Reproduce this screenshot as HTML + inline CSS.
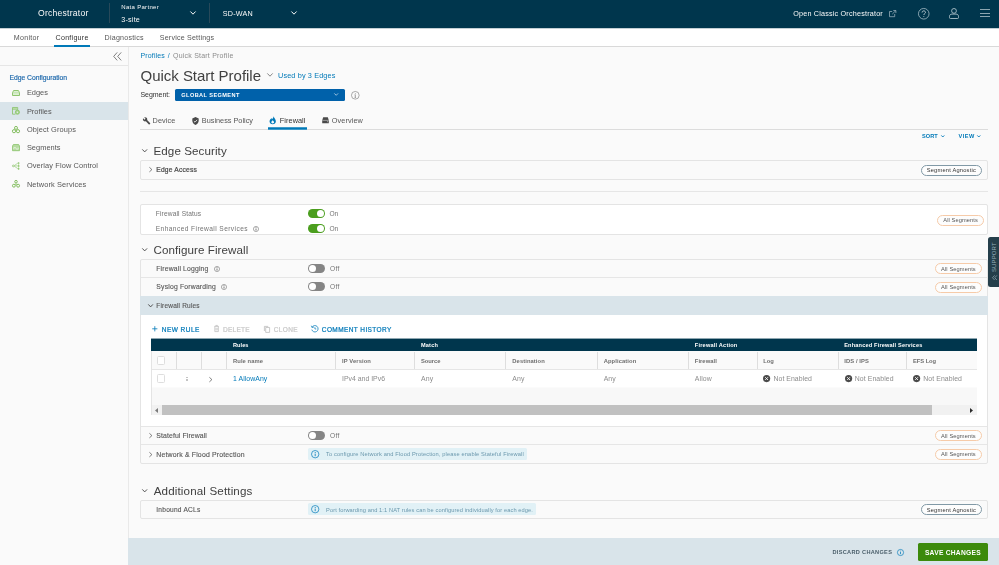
<!DOCTYPE html>
<html><head><meta charset="utf-8"><title>Orchestrator</title>
<style>
*{box-sizing:border-box;margin:0;padding:0}
html,body{width:999px;height:565px;overflow:hidden;background:#fafafa;font-family:"Liberation Sans",sans-serif;color:#565656}
.a{position:absolute;white-space:nowrap;line-height:1}
#tx{position:absolute;left:0;top:0;width:999px;height:565px;will-change:transform}
.b{position:absolute}
svg{position:absolute;overflow:visible}
.card{position:absolute;background:#fafafa;border:1px solid #e4e4e4;border-radius:2px}
.hl{position:absolute;height:1px;background:#e6e6e6}
.vl{position:absolute;width:1px;background:#dedede}
.badge{position:absolute;border:1px solid #8199a6;border-radius:6px;background:#fdfdfd;height:11.1px}
.badge.o{border-color:#f6cba9}
.tog{position:absolute;width:17px;height:9.2px;border-radius:4.6px;background:#4b9e1e}
.tog i{position:absolute;width:7.2px;height:7.2px;border-radius:50%;background:#fff;top:1px;left:8.8px}
.tog.off{background:#858585}
.tog.off i{left:1px}
.cb{position:absolute;width:8.8px;height:8.8px;border:1px solid #dedede;border-radius:1.5px;background:#fff}
.alert{position:absolute;background:#e1f1f6;border-radius:1.5px;height:12px}
</style></head><body>
<!-- header -->
<div class="b" style="left:0;top:0;width:999px;height:28.4px;background:#00364d"></div>
<div class="b" style="left:109px;top:3px;width:1px;height:20px;background:#27495a"></div>
<div class="b" style="left:209px;top:3px;width:1px;height:20px;background:#27495a"></div>
<svg style="left:190px;top:11.4px" width="6" height="4" viewBox="0 0 6 4"><path d="M.4.5 3 3.2 5.6.5" fill="none" stroke="#fafafa" stroke-width="1"/></svg>
<svg style="left:291.4px;top:11.4px" width="6" height="4" viewBox="0 0 6 4"><path d="M.4.5 3 3.2 5.6.5" fill="none" stroke="#fafafa" stroke-width="1"/></svg>
<!-- ext link -->
<svg style="left:888.7px;top:9.6px" width="7.4" height="7.2" viewBox="0 0 7.4 7.2"><path d="M3.2 1.500H.5V6.700H5.700V4" fill="none" stroke="#9db3be" stroke-width=".75"/><path d="M4.300.5H6.900V3.100M6.800.6 3.300 4.100" fill="none" stroke="#9db3be" stroke-width=".75"/></svg>
<!-- help -->
<svg style="left:918.2px;top:7.5px" width="11.5" height="11.5" viewBox="0 0 11.5 11.5"><circle cx="5.750" cy="5.750" r="5.300" fill="none" stroke="#a5bbc5" stroke-width=".8"/><path d="M4.100 4.500C4.100 3.400 4.900 2.900 5.800 2.900S7.500 3.500 7.500 4.400C7.500 5.600 5.800 5.700 5.800 7" fill="none" stroke="#b5c7cf" stroke-width="1"/><circle cx="5.800" cy="8.500" r=".55" fill="#a5bbc5"/></svg>
<!-- user -->
<svg style="left:949.4px;top:8px" width="10" height="11" viewBox="0 0 10 11"><circle cx="5" cy="2.900" r="2.400" fill="none" stroke="#b5c7cf" stroke-width=".85"/><path d="M.5 9.600V8.300C.5 6.900 1.600 6.100 3 6.100H7C8.400 6.100 9.500 6.900 9.500 8.300V9.600C9.500 10.200 9.100 10.500 8.600 10.500H1.400C.9 10.500.5 10.200.5 9.600Z" fill="none" stroke="#b5c7cf" stroke-width=".85"/></svg>
<!-- hamburger -->
<div class="b" style="left:979.9px;top:9.300px;width:10.200px;height:1.2px;background:#8ba5b0"></div>
<div class="b" style="left:979.9px;top:12.700px;width:10.200px;height:1.2px;background:#8ba5b0"></div>
<div class="b" style="left:979.9px;top:16.100px;width:10.200px;height:1.2px;background:#8ba5b0"></div>

<!-- nav -->
<div class="b" style="left:0;top:28.4px;width:999px;height:18px;background:#fff"></div>
<div class="b" style="left:0;top:28px;width:999px;height:1px;background:#c3d0d5"></div>
<div class="b" style="left:0;top:46px;width:999px;height:1px;background:#d9d9d9"></div>
<div class="b" style="left:54.2px;top:45px;width:35.800px;height:2px;background:#0079b8"></div>

<!-- sidebar -->
<div class="b" style="left:0;top:47px;width:128px;height:518px;background:#fafafa"></div>
<div class="b" style="left:127.5px;top:47px;width:1px;height:518px;background:#e9e9e9"></div>
<div class="b" style="left:0;top:64.800px;width:128px;height:1px;background:#e6e6e6"></div>
<svg style="left:112.800px;top:51.600px" width="9" height="9" viewBox="0 0 9 9"><path d="M4.200.4.700 4.400 4.200 8.400M8.200.4 4.700 4.400 8.200 8.400" fill="none" stroke="#565656" stroke-width=".75"/></svg>
<div class="b" style="left:0;top:102px;width:127.500px;height:18.200px;background:#d9e4ea"></div>
<!--SISTART-->
<!-- side icons -->
<svg style="left:12px;top:89.800px" width="8" height="6" viewBox="0 0 8 6"><path d="M1.600.5H6.400L7.500 2.700V5.500H.5V2.700Z" fill="#dcefd2" stroke="#84c061" stroke-width=".9"/><path d="M.6 2.800H7.400" stroke="#a9d590" stroke-width=".6"/></svg>
<svg style="left:12px;top:106.800px" width="8" height="7.800" viewBox="0 0 8 7.800"><path d="M.5.500H5.700V2.800M3.400 7.200H.5V.5M.5 2.200H5.700" fill="none" stroke="#86c064" stroke-width=".8"/><path d="M1 1H5.200V2.200H1Z" fill="#b5dba0"/><circle cx="5.400" cy="5.200" r="2.100" fill="#a5d48a" stroke="#86c064" stroke-width=".7"/><circle cx="5.400" cy="5.200" r=".7" fill="#e4edf0"/></svg>
<svg style="left:12px;top:125.600px" width="8" height="7.200" viewBox="0 0 8 7.200"><circle cx="4" cy="1.900" r="1.500" fill="none" stroke="#7dba58" stroke-width=".95"/><circle cx="2" cy="5.200" r="1.600" fill="none" stroke="#7dba58" stroke-width=".95"/><circle cx="6" cy="5.200" r="1.600" fill="none" stroke="#7dba58" stroke-width=".95"/></svg>
<svg style="left:12px;top:143.800px" width="8" height="7.200" viewBox="0 0 8 7.200"><path d="M1.400.5H6.600L7.500 2V6.700H.5V2Z" fill="#b5dba0" stroke="#86c064" stroke-width=".75"/><path d="M1.800 5.200V3.600H3.600L4.400 5.200H6.200V3.600" fill="none" stroke="#f1f8ec" stroke-width=".7"/></svg>
<svg style="left:12px;top:161.800px" width="8" height="7.800" viewBox="0 0 8 7.800"><circle cx="1.300" cy="3.900" r=".9" fill="none" stroke="#7fbb5b" stroke-width=".6"/><path d="M2.200 3.900H5.800M2.200 3.600 5.800 1.200M2.200 4.200 5.800 6.600" stroke="#8fc86e" stroke-width=".6"/><circle cx="6.600" cy="1" r=".85" fill="#86c064"/><circle cx="6.600" cy="3.900" r=".85" fill="#86c064"/><circle cx="6.600" cy="6.800" r=".85" fill="#86c064"/><path d="M6.600 1V6.800" stroke="#9fd082" stroke-width=".6"/></svg>
<svg style="left:12px;top:180px" width="8" height="7.600" viewBox="0 0 8 7.600"><circle cx="4" cy="1.700" r="1.300" fill="none" stroke="#7dba58" stroke-width=".95"/><circle cx="1.900" cy="5.700" r="1.450" fill="none" stroke="#7dba58" stroke-width=".95"/><circle cx="6.100" cy="5.700" r="1.450" fill="none" stroke="#7dba58" stroke-width=".95"/><path d="M4 3V4.400L2.800 4.900M4 4.400 5.200 4.900" fill="none" stroke="#8fc86e" stroke-width=".65"/></svg>
<!--SIEND-->

<!-- main -->
<!--MAINSTART-->
<!-- title chevron -->
<svg style="left:266.600px;top:73.400px" width="6" height="4" viewBox="0 0 6 4"><path d="M.3.4 3 3.200 5.700.4" fill="none" stroke="#565656" stroke-width=".7"/></svg>
<!-- segment select -->
<div class="b" style="left:174.800px;top:88.500px;width:170.400px;height:12px;background:#0061aa;border-radius:1.500px"></div>
<svg style="left:334.400px;top:93.300px" width="4.400" height="3" viewBox="0 0 4.400 3"><path d="M.3.4 2.200 2.300 4.100.4" fill="none" stroke="#dbe9f4" stroke-width=".7"/></svg>
<svg style="left:351.200px;top:90.800px" width="8.600" height="8.600" viewBox="0 0 8.600 8.600"><circle cx="4.300" cy="4.300" r="3.850" fill="none" stroke="#737373" stroke-width=".6"/><path d="M4.300 3.700V6.300M3.600 6.400H5M3.700 3.700H4.300" fill="none" stroke="#737373" stroke-width=".65"/><circle cx="4.300" cy="2.400" r=".45" fill="#737373"/></svg>
<!-- tabs -->
<div class="hl" style="left:140px;top:129.300px;width:847.700px;background:#dcdcdc"></div>
<div class="b" style="left:268px;top:127px;width:38.800px;height:3px;background:#3e99c8"></div>
<div class="b" style="left:268px;top:128px;width:38.800px;height:1px;background:#0079b8"></div>
<!-- tab icons -->
<svg style="left:142.500px;top:116.700px" width="7.600" height="7.600" viewBox="0 0 16 16"><path d="M15.200 13 8.700 6.500C9.300 4.800 8.900 2.900 7.600 1.600 6.200.2 4.100-.1 2.400.7L5.400 3.700 3.300 5.800.2 2.800C-.6 4.500-.3 6.600 1.100 8 2.400 9.300 4.300 9.700 6 9.100L12.500 15.600C12.800 15.900 13.200 15.900 13.500 15.600L15.100 14C15.500 13.700 15.500 13.200 15.200 13Z" fill="#4a4a4a"/></svg>
<svg style="left:192px;top:116.500px" width="7" height="8.200" viewBox="0 0 14 16.400"><path d="M7 .2.600 3V7.200C.6 11.100 3.300 14.800 7 16 10.700 14.800 13.400 11.100 13.400 7.200V3Z" fill="#4a4a4a"/><path d="M3.800 8.200 6 10.400 10.200 5.700" fill="none" stroke="#fafafa" stroke-width="1.600"/></svg>
<svg style="left:269.400px;top:116.300px" width="7.400" height="8.600" viewBox="0 0 15 17.400"><path d="M8.800.6C9.600 3.600 7.200 4.800 5.900 6.900 5.400 5.900 5.500 5 5.700 4.200 3 5.900 1.100 8.500 1.100 11.200 1.100 14.400 3.800 16.800 7.500 16.800S13.900 14.400 13.900 11.200C13.900 6.800 10.700 4.700 8.800.6Z" fill="#0079b8"/><path d="M7.500 15C5.800 15 4.700 13.900 4.700 12.600 4.700 11 6.300 10 7.300 8.400 8.800 10 10.300 11 10.300 12.600 10.300 13.900 9.200 15 7.500 15Z" fill="#fafafa"/></svg>
<svg style="left:321.800px;top:117.300px" width="7" height="6.400" viewBox="0 0 14 12.800"><path d="M2.400.4H11.600L13.600 6.600V12.400H.4V6.600Z" fill="#4a4a4a"/><path d="M.4 6.800H13.600" stroke="#fafafa" stroke-width=".9"/><circle cx="11" cy="9.600" r=".9" fill="#fafafa"/></svg>
<!-- sort/view chevrons -->
<svg style="left:940.700px;top:134.800px" width="3.600" height="2.600" viewBox="0 0 3.600 2.600"><path d="M.3.4 1.800 2 3.300.4" fill="none" stroke="#0079b8" stroke-width=".9"/></svg>
<svg style="left:977.200px;top:134.800px" width="3.600" height="2.600" viewBox="0 0 3.600 2.600"><path d="M.3.4 1.800 2 3.300.4" fill="none" stroke="#0079b8" stroke-width=".9"/></svg>
<!-- section chevrons -->
<svg style="left:142.200px;top:149.100px" width="5.400" height="3.600" viewBox="0 0 5.400 3.600"><path d="M.3.400 2.700 2.900 5.100.4" fill="none" stroke="#4a4a4a" stroke-width=".95"/></svg>
<svg style="left:142.200px;top:248.100px" width="5.400" height="3.600" viewBox="0 0 5.400 3.600"><path d="M.3.400 2.700 2.900 5.100.4" fill="none" stroke="#4a4a4a" stroke-width=".95"/></svg>
<svg style="left:142.200px;top:489.100px" width="5.400" height="3.600" viewBox="0 0 5.400 3.600"><path d="M.3.400 2.700 2.900 5.100.4" fill="none" stroke="#4a4a4a" stroke-width=".95"/></svg>
<!-- edge access card -->
<div class="card" style="left:140px;top:160px;width:847.700px;height:20px"></div>
<svg style="left:148.700px;top:167.400px" width="3.400" height="5.200" viewBox="0 0 3.400 5.200"><path d="M.4.300 2.900 2.600.4 4.900" fill="none" stroke="#565656" stroke-width=".75"/></svg>
<div class="badge" style="left:920.700px;top:164.800px;width:61.200px"></div>
<div class="hl" style="left:140px;top:191px;width:847.700px"></div>
<!-- firewall status card -->
<div class="card" style="left:140px;top:204px;width:847.700px;height:31px;background:#fff"></div>
<div class="tog" style="left:307.800px;top:208.900px"><i></i></div>
<div class="tog" style="left:307.800px;top:224.100px"><i></i></div>
<svg style="left:253px;top:225.800px" width="6" height="6" viewBox="0 0 8.600 8.600"><circle cx="4.300" cy="4.300" r="3.700" fill="none" stroke="#6a6a6a" stroke-width=".8"/><path d="M4.300 3.600V6.500" stroke="#565656" stroke-width="1.100"/><circle cx="4.300" cy="2.300" r=".7" fill="#565656"/></svg>
<div class="badge o" style="left:937.300px;top:214.600px;width:46.500px"></div>
<!-- configure card -->
<div class="card" style="left:140px;top:259px;width:847.700px;height:205px"></div>
<div class="hl" style="left:141px;top:277.400px;width:845.700px"></div>
<div class="tog off" style="left:308px;top:264.100px"><i></i></div>
<div class="tog off" style="left:308px;top:282.300px"><i></i></div>
<svg style="left:214px;top:265.900px" width="6" height="6" viewBox="0 0 8.600 8.600"><circle cx="4.300" cy="4.300" r="3.700" fill="none" stroke="#6a6a6a" stroke-width=".8"/><path d="M4.300 3.600V6.500" stroke="#565656" stroke-width="1.100"/><circle cx="4.300" cy="2.300" r=".7" fill="#565656"/></svg>
<svg style="left:221.300px;top:284.200px" width="6" height="6" viewBox="0 0 8.600 8.600"><circle cx="4.300" cy="4.300" r="3.700" fill="none" stroke="#6a6a6a" stroke-width=".8"/><path d="M4.300 3.600V6.500" stroke="#565656" stroke-width="1.100"/><circle cx="4.300" cy="2.300" r=".7" fill="#565656"/></svg>
<div class="badge o" style="left:935.100px;top:263.300px;width:46.800px"></div>
<div class="badge o" style="left:935.100px;top:282px;width:46.800px"></div>
<!-- firewall rules band -->
<div class="b" style="left:140px;top:296.400px;width:847.700px;height:18.400px;background:#d9e4ea"></div>
<svg style="left:147.900px;top:304.200px" width="5.200" height="3.400" viewBox="0 0 5.200 3.400"><path d="M.3.400 2.600 2.900 4.900.4" fill="none" stroke="#4a4a4a" stroke-width=".95"/></svg>
<div class="b" style="left:141px;top:314.800px;width:845.700px;height:111.600px;background:#fff"></div>
<!-- toolbar icons -->
<svg style="left:152.200px;top:326.300px" width="5.600" height="5.600" viewBox="0 0 5.600 5.600"><path d="M2.800.2V5.400M.2 2.800H5.400" stroke="#0079b8" stroke-width=".8"/></svg>
<svg style="left:213.500px;top:325.400px" width="5.200" height="7" viewBox="0 0 5.200 7"><path d="M.3 1.400H4.900M1.800 1.400V.4H3.400V1.400M.8 1.600V6.600H4.400V1.600M2 2.800V5.400M3.200 2.800V5.400" fill="none" stroke="#bdbdbd" stroke-width=".75"/></svg>
<svg style="left:264.400px;top:325.600px" width="6" height="6.800" viewBox="0 0 6 6.800"><path d="M1.700 1.500H5.600V6.400H1.700Z" fill="none" stroke="#bdbdbd" stroke-width=".8"/><path d="M.4 5V.4H4.200" fill="none" stroke="#bdbdbd" stroke-width=".8"/></svg>
<svg style="left:311.300px;top:325.200px" width="7.400" height="7.400" viewBox="0 0 7.400 7.400"><path d="M1.100 2.200A3.200 3.200 0 1 1 .8 4.600" fill="none" stroke="#0079b8" stroke-width=".75"/><path d="M.3.700 1 2.500 2.800 2.200" fill="none" stroke="#0079b8" stroke-width=".7"/><path d="M3.900 2.200V4H5.300" fill="none" stroke="#0079b8" stroke-width=".7"/></svg>
<!-- table -->
<div class="b" style="left:151px;top:338px;width:826.300px;height:1px;background:#8fa7b1"></div>
<div class="b" style="left:151px;top:339px;width:826.300px;height:12px;background:#00364d"></div>
<div class="b" style="left:151px;top:351px;width:826.300px;height:18px;background:#fafafa"></div>
<div class="hl" style="left:151px;top:368.700px;width:826.300px;background:#e6e6e6"></div>
<div class="b" style="left:151px;top:387px;width:826.300px;height:1px;background:#fbfbfb"></div>
<div class="b" style="left:151px;top:388px;width:826.300px;height:17px;background:#f8f8f8"></div>
<div class="b" style="left:151px;top:405px;width:826.300px;height:10.400px;background:#f1f1f1"></div>
<div class="b" style="left:162.200px;top:405px;width:769.800px;height:10.400px;background:#c1c1c1"></div>
<svg style="left:155px;top:407.800px" width="3" height="5" viewBox="0 0 3 5"><path d="M3 0V5L0 2.500Z" fill="#7a7a7a"/></svg>
<svg style="left:970.300px;top:407.800px" width="3" height="5" viewBox="0 0 3 5"><path d="M0 0V5L3 2.500Z" fill="#2b2b2b"/></svg>
<div class="vl" style="left:150.500px;top:351px;height:64.400px;background:#e4e4e4"></div>
<div class="vl" style="left:175.800px;top:352px;height:16.700px"></div>
<div class="vl" style="left:200.800px;top:352px;height:16.700px"></div>
<div class="vl" style="left:225.800px;top:352px;height:16.700px"></div>
<div class="vl" style="left:335px;top:352px;height:16.700px"></div>
<div class="vl" style="left:414.200px;top:352px;height:16.700px"></div>
<div class="vl" style="left:505.400px;top:352px;height:16.700px"></div>
<div class="vl" style="left:596.800px;top:352px;height:16.700px"></div>
<div class="vl" style="left:687.900px;top:352px;height:16.700px"></div>
<div class="vl" style="left:756.600px;top:352px;height:16.700px"></div>
<div class="vl" style="left:837.900px;top:352px;height:16.700px"></div>
<div class="vl" style="left:906.200px;top:352px;height:16.700px"></div>
<div class="cb" style="left:156.700px;top:356.100px"></div>
<div class="cb" style="left:156.700px;top:374.300px"></div>
<!-- drag handle -->
<div class="b" style="left:186.200px;top:377.200px;width:1.600px;height:.8px;background:#c4c4c4"></div>
<div class="b" style="left:186.200px;top:378.700px;width:1.600px;height:.8px;background:#c4c4c4"></div>
<div class="b" style="left:186.200px;top:380.200px;width:1.600px;height:.8px;background:#c4c4c4"></div>
<svg style="left:209.200px;top:376.900px" width="3.400" height="5.200" viewBox="0 0 3.400 5.200"><path d="M.4.300 2.900 2.600.4 4.900" fill="none" stroke="#565656" stroke-width=".75"/></svg>
<!-- x icons -->
<svg style="left:763.4px;top:375.400px" width="7.200" height="7.200" viewBox="0 0 6.600 6.600"><circle cx="3.300" cy="3.300" r="3.300" fill="#4a4a4a"/><path d="M2 2 4.600 4.600M4.600 2 2 4.600" stroke="#fff" stroke-width=".8"/></svg>
<svg style="left:844.5px;top:375.400px" width="7.200" height="7.200" viewBox="0 0 6.600 6.600"><circle cx="3.300" cy="3.300" r="3.300" fill="#4a4a4a"/><path d="M2 2 4.600 4.600M4.600 2 2 4.600" stroke="#fff" stroke-width=".8"/></svg>
<svg style="left:913.0px;top:375.400px" width="7.200" height="7.200" viewBox="0 0 6.600 6.600"><circle cx="3.300" cy="3.300" r="3.300" fill="#4a4a4a"/><path d="M2 2 4.600 4.600M4.600 2 2 4.600" stroke="#fff" stroke-width=".8"/></svg>
<!-- stateful / network rows -->
<div class="hl" style="left:141px;top:426.300px;width:845.700px"></div>
<div class="hl" style="left:141px;top:444.400px;width:845.700px"></div>
<svg style="left:148.700px;top:433px" width="3.400" height="5.200" viewBox="0 0 3.400 5.200"><path d="M.4.300 2.900 2.600.4 4.900" fill="none" stroke="#565656" stroke-width=".75"/></svg>
<svg style="left:148.700px;top:451.500px" width="3.400" height="5.200" viewBox="0 0 3.400 5.200"><path d="M.4.300 2.900 2.600.4 4.900" fill="none" stroke="#565656" stroke-width=".75"/></svg>
<div class="tog off" style="left:308px;top:431.100px"><i></i></div>
<div class="badge o" style="left:935.100px;top:430.100px;width:46.800px"></div>
<div class="badge o" style="left:935.100px;top:448.600px;width:46.800px"></div>
<div class="alert" style="left:308.200px;top:448px;width:218.600px"></div>
<svg style="left:311.200px;top:449.900px" width="8.400" height="8.400" viewBox="0 0 8.400 8.400"><circle cx="4.200" cy="4.200" r="3.700" fill="none" stroke="#0079b8" stroke-width=".7"/><path d="M4.200 3.600V6.200" stroke="#0079b8" stroke-width=".8"/><circle cx="4.200" cy="2.400" r=".5" fill="#0079b8"/></svg>
<!-- inbound card -->
<div class="card" style="left:140px;top:500px;width:847.700px;height:19px"></div>
<div class="alert" style="left:308.200px;top:503.400px;width:227.600px"></div>
<svg style="left:311.200px;top:505.300px" width="8.400" height="8.400" viewBox="0 0 8.400 8.400"><circle cx="4.200" cy="4.200" r="3.700" fill="none" stroke="#0079b8" stroke-width=".7"/><path d="M4.200 3.600V6.200" stroke="#0079b8" stroke-width=".8"/><circle cx="4.200" cy="2.400" r=".5" fill="#0079b8"/></svg>
<div class="badge" style="left:920.700px;top:504.300px;width:61.200px"></div>
<!-- footer -->
<div class="b" style="left:128px;top:538.200px;width:871px;height:27px;background:#d9e4ea"></div>
<div class="b" style="left:918.300px;top:543.300px;width:69.500px;height:18px;background:#3c8a0b;border-radius:1.500px"></div>
<svg style="left:897px;top:549px" width="7" height="7" viewBox="0 0 8.400 8.400"><circle cx="4.200" cy="4.200" r="3.700" fill="none" stroke="#0079b8" stroke-width=".8"/><path d="M4.200 3.600V6.200" stroke="#0079b8" stroke-width=".9"/><circle cx="4.200" cy="2.400" r=".55" fill="#0079b8"/></svg>
<!-- support tab -->
<div class="b" style="left:987.700px;top:237.400px;width:12px;height:49.200px;background:#253f4b;border-radius:2.500px 0 0 2.500px"></div>
<span class="a" style="left:991px;top:272.400px;font-size:6px;color:#97afbb;transform-origin:0 0;transform:rotate(-90deg);letter-spacing:.12px">SUPPORT</span>
<svg style="left:991.700px;top:274.600px" width="5.400" height="5.400" viewBox="0 0 5.400 5.400"><path d="M2.600.4.500 2.700 2.600 5M4.900.4 2.800 2.700 4.900 5" fill="none" stroke="#a9bfca" stroke-width=".6"/></svg>
<!--MAINEND-->
<div id="tx">
<span class="a" style="left:38.10px;top:9.00px;font-size:8.6px;letter-spacing:0.220px;color:#fafafa;">Orchestrator</span>
<span class="a" style="left:121.30px;top:4.00px;font-size:6.0px;letter-spacing:0.306px;color:#fafafa;">Nata Partner</span>
<span class="a" style="left:121.30px;top:16.00px;font-size:7.2px;letter-spacing:0.187px;color:#fafafa;">3-site</span>
<span class="a" style="left:222.80px;top:10.00px;font-size:7.2px;letter-spacing:0.218px;color:#fafafa;">SD-WAN</span>
<span class="a" style="left:793.20px;top:10.00px;font-size:7.2px;letter-spacing:0.204px;color:#fafafa;">Open Classic Orchestrator</span>
<span class="a" style="left:13.80px;top:35.00px;font-size:7.1px;letter-spacing:0.263px;color:#565656;">Monitor</span>
<span class="a" style="left:55.60px;top:35.00px;font-size:7.1px;letter-spacing:0.248px;color:#313131;">Configure</span>
<span class="a" style="left:104.60px;top:35.00px;font-size:7.1px;letter-spacing:0.221px;color:#565656;">Diagnostics</span>
<span class="a" style="left:159.80px;top:35.00px;font-size:7.1px;letter-spacing:0.196px;color:#565656;">Service Settings</span>
<span class="a" style="left:9.60px;top:75.00px;font-size:6.8px;letter-spacing:-0.050px;color:#1a66aa;-webkit-text-stroke:.15px">Edge Configuration</span>
<span class="a" style="left:26.90px;top:89.00px;font-size:7.4px;letter-spacing:0.006px;color:#565656;">Edges</span>
<span class="a" style="left:26.90px;top:108.00px;font-size:7.4px;letter-spacing:0.018px;color:#565656;">Profiles</span>
<span class="a" style="left:26.90px;top:126.00px;font-size:7.4px;letter-spacing:0.111px;color:#565656;">Object Groups</span>
<span class="a" style="left:26.90px;top:144.00px;font-size:7.4px;letter-spacing:0.052px;color:#565656;">Segments</span>
<span class="a" style="left:26.90px;top:162.00px;font-size:7.4px;letter-spacing:0.110px;color:#565656;">Overlay Flow Control</span>
<span class="a" style="left:26.90px;top:181.00px;font-size:7.4px;letter-spacing:0.125px;color:#565656;">Network Services</span>
<span class="a" style="left:140.50px;top:52.00px;font-size:7.0px;letter-spacing:0.145px;color:#0079b8;">Profiles</span>
<span class="a" style="left:167.80px;top:52.00px;font-size:7.0px;letter-spacing:0.647px;color:#0079b8;">/</span>
<span class="a" style="left:173.00px;top:52.00px;font-size:7.0px;letter-spacing:0.215px;color:#8c8c8c;">Quick Start Profile</span>
<span class="a" style="left:140.50px;top:68.00px;font-size:15px;letter-spacing:-0.020px;color:#404040;">Quick Start Profile</span>
<span class="a" style="left:278.00px;top:72.00px;font-size:7.3px;letter-spacing:0.128px;color:#0079b8;">Used by 3 Edges</span>
<span class="a" style="left:140.50px;top:91.00px;font-size:7.0px;letter-spacing:-0.059px;color:#313131;">Segment:</span>
<span class="a" style="left:181.30px;top:93.00px;font-size:5.6px;letter-spacing:0.412px;color:#ffffff;font-weight:700;">GLOBAL SEGMENT</span>
<span class="a" style="left:152.50px;top:117.00px;font-size:7.3px;letter-spacing:0.115px;color:#565656;">Device</span>
<span class="a" style="left:201.80px;top:117.00px;font-size:7.3px;letter-spacing:0.006px;color:#565656;">Business Policy</span>
<span class="a" style="left:279.80px;top:117.00px;font-size:7.3px;letter-spacing:0.070px;color:#313131;">Firewall</span>
<span class="a" style="left:331.80px;top:117.00px;font-size:7.3px;letter-spacing:0.097px;color:#565656;">Overview</span>
<span class="a" style="left:921.90px;top:134.00px;font-size:5.6px;letter-spacing:0.088px;color:#0079b8;font-weight:700;">SORT</span>
<span class="a" style="left:958.50px;top:134.00px;font-size:5.6px;letter-spacing:0.476px;color:#0079b8;font-weight:700;">VIEW</span>
<span class="a" style="left:153.50px;top:145.00px;font-size:11.6px;letter-spacing:0.086px;color:#404040;">Edge Security</span>
<span class="a" style="left:153.50px;top:244.00px;font-size:11.6px;letter-spacing:0.076px;color:#404040;">Configure Firewall</span>
<span class="a" style="left:153.70px;top:485.00px;font-size:11.6px;letter-spacing:0.145px;color:#404040;">Additional Settings</span>
<span class="a" style="left:156.30px;top:167.00px;font-size:6.7px;letter-spacing:0.184px;color:#4a4a4a;-webkit-text-stroke:.22px">Edge Access</span>
<span class="a" style="left:155.80px;top:211.00px;font-size:6.6px;letter-spacing:0.150px;color:#737373;">Firewall Status</span>
<span class="a" style="left:155.80px;top:226.00px;font-size:6.6px;letter-spacing:0.416px;color:#737373;">Enhanced Firewall Services</span>
<span class="a" style="left:329.50px;top:211.00px;font-size:6.6px;letter-spacing:-0.148px;color:#737373;">On</span>
<span class="a" style="left:329.50px;top:226.00px;font-size:6.6px;letter-spacing:-0.148px;color:#737373;">On</span>
<span class="a" style="left:156.30px;top:266.00px;font-size:6.8px;letter-spacing:0.169px;color:#565656;-webkit-text-stroke:.12px">Firewall Logging</span>
<span class="a" style="left:156.30px;top:284.00px;font-size:6.8px;letter-spacing:0.200px;color:#565656;-webkit-text-stroke:.12px">Syslog Forwarding</span>
<span class="a" style="left:330.00px;top:266.00px;font-size:6.6px;letter-spacing:0.271px;color:#737373;">Off</span>
<span class="a" style="left:330.00px;top:284.00px;font-size:6.6px;letter-spacing:0.271px;color:#737373;">Off</span>
<span class="a" style="left:156.30px;top:303.00px;font-size:6.5px;letter-spacing:0.191px;color:#565656;-webkit-text-stroke:.12px">Firewall Rules</span>
<span class="a" style="left:156.30px;top:433.00px;font-size:6.9px;letter-spacing:0.098px;color:#565656;-webkit-text-stroke:.12px">Stateful Firewall</span>
<span class="a" style="left:330.00px;top:433.00px;font-size:6.6px;letter-spacing:0.271px;color:#737373;">Off</span>
<span class="a" style="left:156.30px;top:452.00px;font-size:6.9px;letter-spacing:0.178px;color:#565656;-webkit-text-stroke:.12px">Network &amp; Flood Protection</span>
<span class="a" style="left:156.30px;top:507.00px;font-size:6.6px;letter-spacing:0.230px;color:#565656;-webkit-text-stroke:.12px">Inbound ACLs</span>
<span class="a" style="left:161.80px;top:327.00px;font-size:6.5px;letter-spacing:0.461px;color:#0079b8;-webkit-text-stroke:.22px">NEW RULE</span>
<span class="a" style="left:223.00px;top:327.00px;font-size:6.5px;letter-spacing:0.284px;color:#c8c8c8;-webkit-text-stroke:.22px">DELETE</span>
<span class="a" style="left:273.80px;top:327.00px;font-size:6.5px;letter-spacing:0.359px;color:#c8c8c8;-webkit-text-stroke:.22px">CLONE</span>
<span class="a" style="left:321.80px;top:327.00px;font-size:6.5px;letter-spacing:0.404px;color:#0079b8;-webkit-text-stroke:.22px">COMMENT HISTORY</span>
<span class="a" style="left:233.00px;top:343.00px;font-size:5.6px;letter-spacing:0.053px;color:#ffffff;font-weight:700;">Rules</span>
<span class="a" style="left:421.00px;top:343.00px;font-size:5.6px;letter-spacing:0.166px;color:#ffffff;font-weight:700;">Match</span>
<span class="a" style="left:694.80px;top:343.00px;font-size:5.6px;letter-spacing:0.208px;color:#ffffff;font-weight:700;">Firewall Action</span>
<span class="a" style="left:844.20px;top:343.00px;font-size:5.6px;letter-spacing:0.177px;color:#ffffff;font-weight:700;">Enhanced Firewall Services</span>
<span class="a" style="left:233.00px;top:359.00px;font-size:5.8px;letter-spacing:0.075px;color:#6e6e6e;font-weight:700;">Rule name</span>
<span class="a" style="left:342.00px;top:359.00px;font-size:5.8px;letter-spacing:0.106px;color:#6e6e6e;font-weight:700;">IP Version</span>
<span class="a" style="left:421.00px;top:359.00px;font-size:5.8px;letter-spacing:-0.026px;color:#6e6e6e;font-weight:700;">Source</span>
<span class="a" style="left:512.30px;top:359.00px;font-size:5.8px;letter-spacing:0.084px;color:#6e6e6e;font-weight:700;">Destination</span>
<span class="a" style="left:603.70px;top:359.00px;font-size:5.8px;letter-spacing:0.094px;color:#6e6e6e;font-weight:700;">Application</span>
<span class="a" style="left:694.80px;top:359.00px;font-size:5.8px;letter-spacing:0.051px;color:#6e6e6e;font-weight:700;">Firewall</span>
<span class="a" style="left:763.30px;top:359.00px;font-size:5.8px;letter-spacing:-0.042px;color:#6e6e6e;font-weight:700;">Log</span>
<span class="a" style="left:844.20px;top:359.00px;font-size:5.8px;letter-spacing:0.106px;color:#6e6e6e;font-weight:700;">IDS / IPS</span>
<span class="a" style="left:913.10px;top:359.00px;font-size:5.8px;letter-spacing:-0.088px;color:#6e6e6e;font-weight:700;">EFS Log</span>
<span class="a" style="left:233.00px;top:376.00px;font-size:6.9px;letter-spacing:0.058px;color:#0079b8;">1 AllowAny</span>
<span class="a" style="left:342.00px;top:376.00px;font-size:6.9px;letter-spacing:0.007px;color:#8c8c8c;">IPv4 and IPv6</span>
<span class="a" style="left:421.00px;top:376.00px;font-size:6.9px;letter-spacing:0.208px;color:#8c8c8c;">Any</span>
<span class="a" style="left:512.30px;top:376.00px;font-size:6.9px;letter-spacing:0.142px;color:#8c8c8c;">Any</span>
<span class="a" style="left:603.70px;top:376.00px;font-size:6.9px;letter-spacing:0.042px;color:#8c8c8c;">Any</span>
<span class="a" style="left:694.80px;top:376.00px;font-size:6.9px;letter-spacing:0.106px;color:#8c8c8c;">Allow</span>
<span class="a" style="left:773.50px;top:376.00px;font-size:6.9px;letter-spacing:0.051px;color:#8c8c8c;">Not Enabled</span>
<span class="a" style="left:854.80px;top:376.00px;font-size:6.9px;letter-spacing:0.078px;color:#8c8c8c;">Not Enabled</span>
<span class="a" style="left:923.30px;top:376.00px;font-size:6.9px;letter-spacing:0.069px;color:#8c8c8c;">Not Enabled</span>
<span class="a" style="left:326.00px;top:452.00px;font-size:5.7px;letter-spacing:0.131px;color:#6b98ad;">To configure Network and Flood Protection, please enable Stateful Firewall</span>
<span class="a" style="left:326.00px;top:508.00px;font-size:5.7px;letter-spacing:0.094px;color:#6b98ad;">Port forwarding and 1:1 NAT rules can be configured individually for each edge.</span>
<span class="a" style="left:926.70px;top:168.00px;font-size:5.7px;letter-spacing:0.216px;color:#313131;">Segment Agnostic</span>
<span class="a" style="left:943.30px;top:218.00px;font-size:5.7px;letter-spacing:0.099px;color:#565656;">All Segments</span>
<span class="a" style="left:941.10px;top:267.00px;font-size:5.7px;letter-spacing:0.099px;color:#565656;">All Segments</span>
<span class="a" style="left:941.10px;top:285.00px;font-size:5.7px;letter-spacing:0.099px;color:#565656;">All Segments</span>
<span class="a" style="left:941.10px;top:434.00px;font-size:5.7px;letter-spacing:0.099px;color:#565656;">All Segments</span>
<span class="a" style="left:941.10px;top:452.00px;font-size:5.7px;letter-spacing:0.099px;color:#565656;">All Segments</span>
<span class="a" style="left:926.70px;top:508.00px;font-size:5.7px;letter-spacing:0.216px;color:#313131;">Segment Agnostic</span>
<span class="a" style="left:832.50px;top:550.00px;font-size:5.6px;letter-spacing:0.312px;color:#4a5e6a;font-weight:700;">DISCARD CHANGES</span>
<span class="a" style="left:924.90px;top:550.00px;font-size:6.7px;letter-spacing:0.249px;color:#ffffff;font-weight:700;">SAVE CHANGES</span>
</div>
</body></html>
